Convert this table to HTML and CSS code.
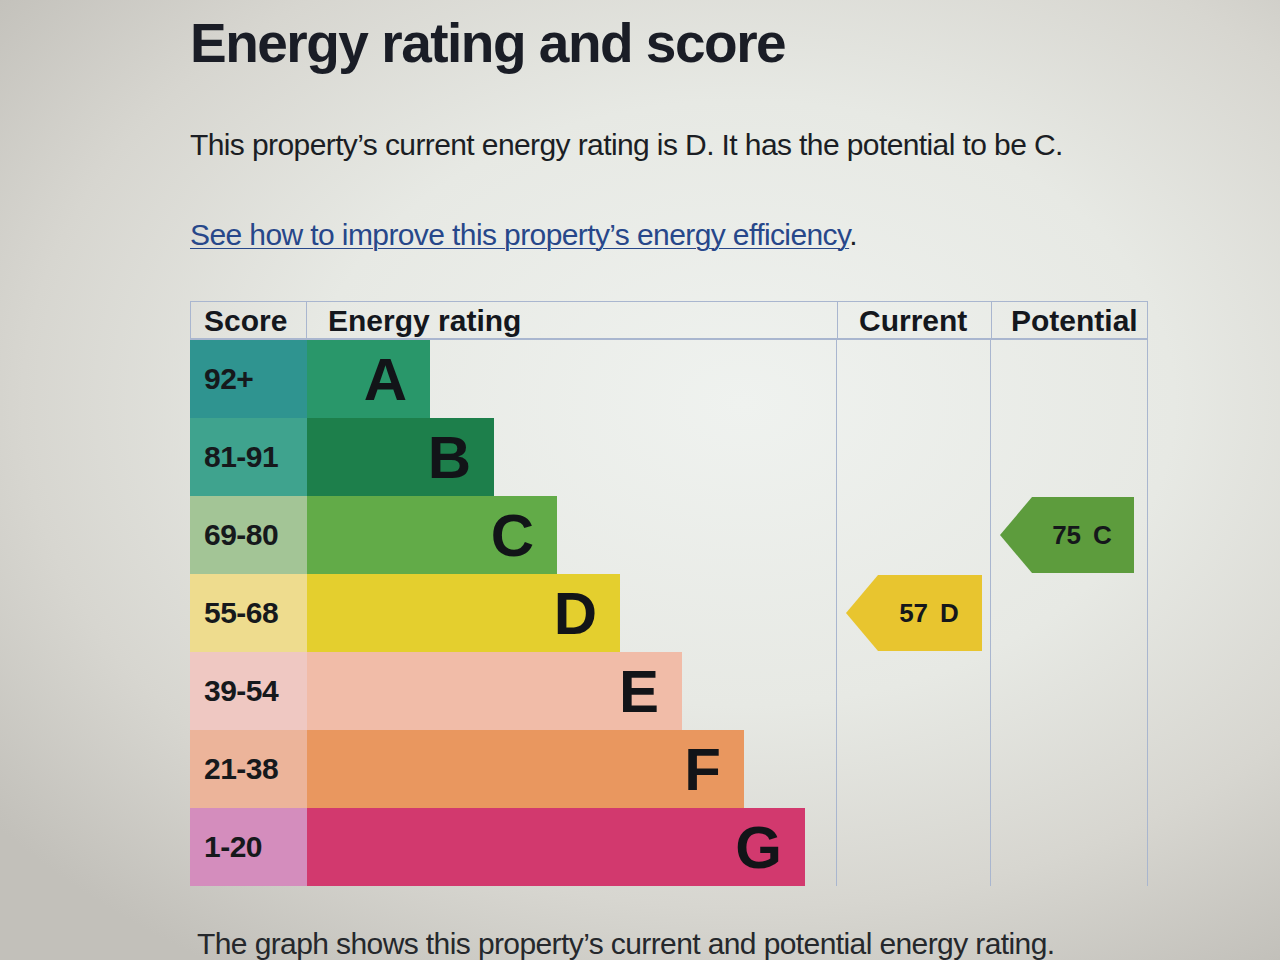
FILE: index.html
```html
<!DOCTYPE html>
<html lang="en">
<head>
<meta charset="utf-8">
<title>Energy rating and score</title>
<link rel="stylesheet" href="styles.css">
</head>
<body>
<main class="page">
  <h1 class="title">Energy rating and score</h1>
  <p class="lead">This property’s current energy rating is D. It has the potential to be C.</p>
  <p class="link-line"><a href="#" class="link">See how to improve this property’s energy efficiency</a>.</p>

  <div class="epc">
    <div class="epc-head">
      <div class="th th-score">Score</div>
      <div class="th th-rating">Energy rating</div>
      <div class="th th-cur">Current</div>
      <div class="th th-pot">Potential</div>
    </div>
    <div class="epc-body">
      <div class="bands">
        <div class="row"><div class="score s-a">92+</div><div class="band-cell"><div class="band b-a" style="width:123px">A</div></div></div>
        <div class="row"><div class="score s-b">81-91</div><div class="band-cell"><div class="band b-b" style="width:187px">B</div></div></div>
        <div class="row"><div class="score s-c">69-80</div><div class="band-cell"><div class="band b-c" style="width:250px">C</div></div></div>
        <div class="row"><div class="score s-d">55-68</div><div class="band-cell"><div class="band b-d" style="width:313px">D</div></div></div>
        <div class="row"><div class="score s-e">39-54</div><div class="band-cell"><div class="band b-e" style="width:375px">E</div></div></div>
        <div class="row"><div class="score s-f">21-38</div><div class="band-cell"><div class="band b-f" style="width:437px">F</div></div></div>
        <div class="row"><div class="score s-g">1-20</div><div class="band-cell"><div class="band b-g" style="width:498px">G</div></div></div>
      </div>
      <div class="col col-cur">
        <div class="slot"></div>
        <div class="slot"></div>
        <div class="slot"></div>
        <div class="slot"><div class="arrow arrow-d"><span>57</span><span>D</span></div></div>
        <div class="slot"></div>
        <div class="slot"></div>
        <div class="slot"></div>
      </div>
      <div class="col col-pot">
        <div class="slot"></div>
        <div class="slot"></div>
        <div class="slot"><div class="arrow arrow-c"><span>75</span><span>C</span></div></div>
        <div class="slot"></div>
        <div class="slot"></div>
        <div class="slot"></div>
        <div class="slot"></div>
      </div>
    </div>
  </div>

  <p class="caption">The graph shows this property’s current and potential energy rating.</p>
</main>
</body>
</html>
```

FILE: styles.css
```css
html, body {
  margin: 0;
  padding: 0;
}

body {
  width: 1280px;
  height: 960px;
  overflow: hidden;
  background: radial-gradient(ellipse 75% 70% at 58% 42%, #eff2ef 0%, #e7e9e4 45%, #d7d6d0 75%, #c2c0ba 100%);
  color: #1b1e24;
  font-family: "Liberation Sans", Arial, sans-serif;
}

.page {
  padding: 13px 0 0 190px;
}

.title {
  margin: 0;
  font-size: 55px;
  line-height: 60px;
  font-weight: 700;
  letter-spacing: -1.5px;
  color: #1a1d26;
}

.lead {
  margin: 54px 0 0;
  font-size: 30px;
  line-height: 36px;
  letter-spacing: -0.6px;
}

.link-line {
  margin: 54px 0 0;
  font-size: 30px;
  line-height: 36px;
  letter-spacing: -0.6px;
  color: #1b1e24;
}

.link {
  color: #27478a;
  text-decoration: underline;
  text-decoration-thickness: 1px;
  text-underline-offset: 3px;
}

/* EPC chart */
.epc {
  margin-top: 48px;
  width: 958px;
}

.epc-head {
  display: flex;
  height: 39px;
  border: 1px solid #a9b6cf;
  border-bottom: 2px solid #a9b6cf;
  box-sizing: border-box;
}

.th {
  font-size: 30px;
  line-height: 37px;
  font-weight: 700;
  color: #14171d;
  box-sizing: border-box;
}

.th-score { width: 115px; padding-left: 13px; }
.th-rating { width: 531px; padding-left: 21px; border-left: 1px solid #a9b6cf; }
.th-cur { width: 154px; padding-left: 21px; border-left: 1px solid #a9b6cf; }
.th-pot { flex: 1; padding-left: 19px; border-left: 1px solid #a9b6cf; }

.epc-body {
  display: flex;
}

.bands {
  width: 646px;
  display: flex;
  flex-direction: column;
}

.row {
  display: flex;
  height: 78px;
}

.score {
  width: 117px;
  padding-left: 14px;
  box-sizing: border-box;
  display: flex;
  align-items: center;
  font-size: 30px;
  font-weight: 700;
  color: #16191c;
  letter-spacing: -0.5px;
}

.band-cell {
  flex: 1;
  display: flex;
}

.band {
  height: 100%;
  box-sizing: border-box;
  padding-right: 23px;
  display: flex;
  align-items: center;
  justify-content: flex-end;
  font-size: 60px;
  font-weight: 700;
  color: #121418;
}

.s-a { background: #2f9490; }
.s-b { background: #3fa38e; }
.s-c { background: #a3c596; }
.s-d { background: #eedc8e; }
.s-e { background: #efc8c2; }
.s-f { background: #ecb49a; }
.s-g { background: #d48dbd; }

.b-a { background: #29976a; }
.b-b { background: #1d7f4b; }
.b-c { background: #62ab48; }
.b-d { background: #e4cf2e; }
.b-e { background: #f1bca8; }
.b-f { background: #e9975f; }
.b-g { background: #d2396e; }

.col {
  display: flex;
  flex-direction: column;
  border-left: 1px solid #a9b6cf;
  box-sizing: border-box;
}

.col-cur { width: 154px; }
.col-pot { width: 158px; border-right: 1px solid #a9b6cf; }

.slot {
  height: 78px;
  display: flex;
  align-items: center;
  padding-left: 9px;
}

.arrow {
  width: 136px;
  height: 76px;
  box-sizing: border-box;
  padding-left: 30px;
  display: flex;
  align-items: center;
  justify-content: center;
  gap: 12px;
  font-size: 26px;
  font-weight: 700;
  color: #15171b;
  clip-path: polygon(32px 0, 100% 0, 100% 100%, 32px 100%, 0 50%);
}

.arrow-d { background: #e8c52f; }
.arrow-c { background: #5d9c3d; width: 134px; }

.caption {
  margin: 44px 0 0 7px;
  font-size: 30px;
  line-height: 28px;
  letter-spacing: -0.6px;
  color: #25282c;
}
```
